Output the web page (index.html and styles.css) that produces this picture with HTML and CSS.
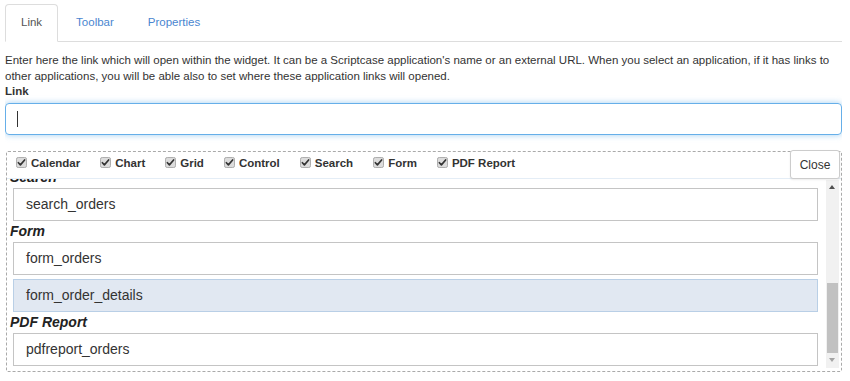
FILE: index.html
```html
<!DOCTYPE html>
<html lang="en">
<head>
    <meta charset="UTF-8">
    <title>Widget Link</title>
    <link rel="stylesheet" href="styles.css">
</head>
<body>

<ul class="tabs">
    <li class="tab active">Link</li>
    <li class="tab">Toolbar</li>
    <li class="tab">Properties</li>
</ul>

<p class="help">Enter here the link which will open within the widget. It can be a Scriptcase application's name or an external URL. When you select an application, if it has links to other applications, you will be able also to set where these application links will opened.</p>

<label class="field-label">Link</label>
<div class="link-input"><span class="caret"></span></div>

<div class="picker">
    <div class="filters">
        <label class="filter"><svg class="check" viewBox="0 0 12 12"><rect x="0.5" y="0.5" width="11" height="11" rx="2"/><path d="M2.6 6.2 L4.8 8.6 L9.4 3.2"/></svg>Calendar</label>
        <label class="filter"><svg class="check" viewBox="0 0 12 12"><rect x="0.5" y="0.5" width="11" height="11" rx="2"/><path d="M2.6 6.2 L4.8 8.6 L9.4 3.2"/></svg>Chart</label>
        <label class="filter"><svg class="check" viewBox="0 0 12 12"><rect x="0.5" y="0.5" width="11" height="11" rx="2"/><path d="M2.6 6.2 L4.8 8.6 L9.4 3.2"/></svg>Grid</label>
        <label class="filter"><svg class="check" viewBox="0 0 12 12"><rect x="0.5" y="0.5" width="11" height="11" rx="2"/><path d="M2.6 6.2 L4.8 8.6 L9.4 3.2"/></svg>Control</label>
        <label class="filter"><svg class="check" viewBox="0 0 12 12"><rect x="0.5" y="0.5" width="11" height="11" rx="2"/><path d="M2.6 6.2 L4.8 8.6 L9.4 3.2"/></svg>Search</label>
        <label class="filter"><svg class="check" viewBox="0 0 12 12"><rect x="0.5" y="0.5" width="11" height="11" rx="2"/><path d="M2.6 6.2 L4.8 8.6 L9.4 3.2"/></svg>Form</label>
        <label class="filter"><svg class="check" viewBox="0 0 12 12"><rect x="0.5" y="0.5" width="11" height="11" rx="2"/><path d="M2.6 6.2 L4.8 8.6 L9.4 3.2"/></svg>PDF Report</label>
    </div>
    <button class="close-btn">Close</button>

    <div class="picker-body">
        <div class="app-list">
            <div class="group-title">Grid</div>
            <div class="app">grid_orders</div>
            <div class="app">grid_customers</div>
            <div class="group-title">Control</div>
            <div class="app">control_login</div>
            <div class="group-title">Search</div>
            <div class="app">search_orders</div>
            <div class="group-title">Form</div>
            <div class="app">form_orders</div>
            <div class="app selected">form_order_details</div>
            <div class="group-title">PDF Report</div>
            <div class="app">pdfreport_orders</div>
        </div>
        <div class="scrollbar">
            <div class="arrow up"></div>
            <div class="track"><div class="thumb"></div></div>
            <div class="arrow down"></div>
        </div>
    </div>
</div>

</body>
</html>
```

FILE: styles.css
```css
body {
    font-family: "Liberation Sans", Arial, sans-serif;
    font-size: 11.5px;
    color: #333;
    background: #fff;
    margin: 4px 8px 0 5px;
}
.tabs {
    display: flex;
    list-style: none;
    margin: 0;
    padding: 0;
    border-bottom: 1px solid #ddd;
}
.tab {
    padding: 9px 15px 11px;
    line-height: 16px;
    margin-right: 2px;
    margin-bottom: -1px;
    color: #4a86d0;
    border: 1px solid transparent;
    border-radius: 4px 4px 0 0;
}
.tab.active {
    color: #555;
    background: #fff;
    border-color: #ddd #ddd transparent;
}
.help {
    margin: 10px 0 0;
    line-height: 16px;
}
.field-label {
    display: block;
    font-weight: bold;
    line-height: 15px;
    margin-bottom: 4px;
}
.link-input {
    height: 30px;
    border: 1px solid #66afe9;
    border-radius: 4px;
    box-shadow: 0 0 6px rgba(102,175,233,0.6);
    display: flex;
    align-items: center;
    padding-left: 11px;
}
.caret {
    width: 1px;
    height: 16px;
    background: #333;
}
.picker {
    position: relative;
    margin: 16px 0 0 1px;
    border: 1px dashed #aaa;
    border-radius: 2px;
}
.filters {
    display: flex;
    gap: 20px;
    height: 22px;
    align-items: center;
    padding: 0 0 4px 9px;
    border-bottom: 1px solid #e4edf6;
}
.filter {
    display: flex;
    align-items: center;
    gap: 4px;
    font-weight: bold;
    color: #333;
}
.check {
    width: 11px;
    height: 11px;
    margin-top: -2px;
}
.check rect {
    fill: #dcdcdc;
    stroke: #a5a5a5;
}
.check path {
    fill: none;
    stroke: #333;
    stroke-width: 1.8;
    stroke-linecap: round;
    stroke-linejoin: round;
}
.close-btn {
    position: absolute;
    top: -2px;
    right: 1px;
    width: 50px;
    height: 29px;
    font-family: inherit;
    font-size: 12px;
    color: #333;
    background: #fff;
    border: 1px solid #ccc;
    border-radius: 3px;
    box-shadow: 0 1px 2px rgba(0,0,0,0.08);
}
.picker-body {
    display: flex;
    height: 192px;
}
.app-list {
    flex: 1;
    display: flex;
    flex-direction: column;
    justify-content: flex-end;
    overflow: hidden;
    padding: 0 8px 5px 3px;
}
.group-title {
    flex-shrink: 0;
    font-size: 14px;
    font-weight: bold;
    font-style: italic;
    line-height: 17px;
    margin: 2px 0;
    color: #222;
}
.app {
    flex-shrink: 0;
    height: 31px;
    line-height: 31px;
    margin-left: 3px;
    padding-left: 12px;
    font-size: 14px;
    color: #333;
    border: 1px solid #c4c4c4;
    background: #fff;
}
.app + .app {
    margin-top: 4px;
}
.app.selected {
    background: #e1e8f2;
    border-color: #b9cfe6;
}
.scrollbar {
    width: 13px;
    margin: 1px 2px 3px 0;
    background: #f1f1f1;
    display: flex;
    flex-direction: column;
}
.arrow {
    height: 14px;
    position: relative;
}
.arrow::after {
    content: "";
    position: absolute;
    left: 3px;
    border-left: 3.5px solid transparent;
    border-right: 3.5px solid transparent;
}
.arrow.up::after {
    top: 5px;
    border-bottom: 4px solid #505050;
}
.arrow.down::after {
    top: 4px;
    border-top: 4px solid #a3a3a3;
}
.track {
    flex: 1;
    display: flex;
    flex-direction: column;
    justify-content: flex-end;
    padding: 0 1px 1px;
}
.thumb {
    height: 70px;
    background: #c1c1c1;
}
```
